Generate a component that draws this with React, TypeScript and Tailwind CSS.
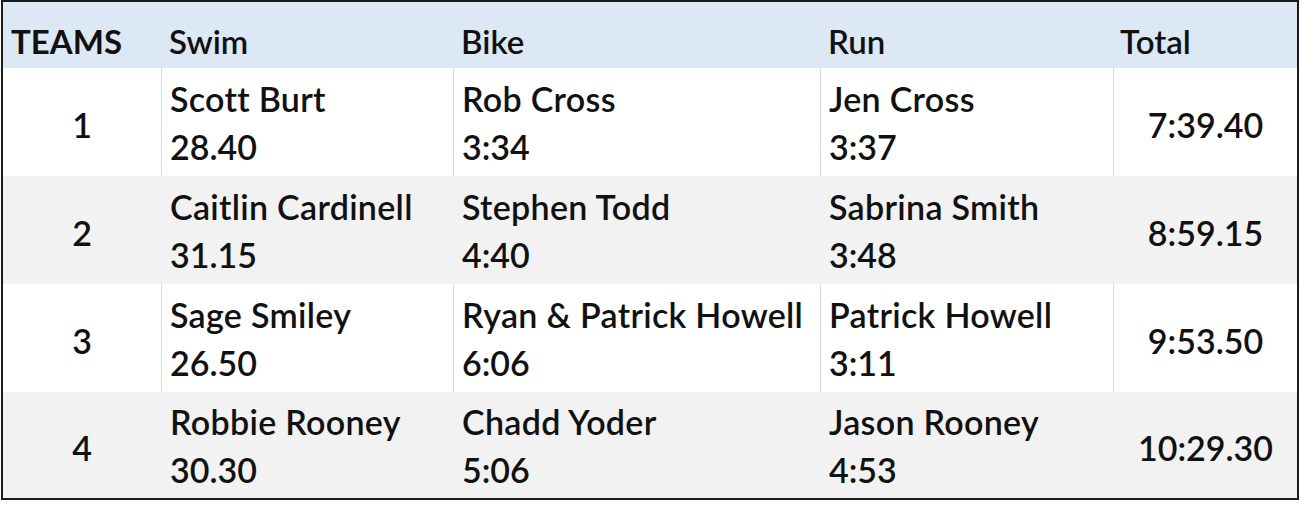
const rows = [
  { team: "1", swim: ["Scott Burt", "28.40"], bike: ["Rob Cross", "3:34"], run: ["Jen Cross", "3:37"], total: "7:39.40" },
  { team: "2", swim: ["Caitlin Cardinell", "31.15"], bike: ["Stephen Todd", "4:40"], run: ["Sabrina Smith", "3:48"], total: "8:59.15" },
  { team: "3", swim: ["Sage Smiley", "26.50"], bike: ["Ryan & Patrick Howell", "6:06"], run: ["Patrick Howell", "3:11"], total: "9:53.50" },
  { team: "4", swim: ["Robbie Rooney", "30.30"], bike: ["Chadd Yoder", "5:06"], run: ["Jason Rooney", "4:53"], total: "10:29.30" },
];

const cols = "grid grid-cols-[158px_292px_367px_293px_184px]";

function Leg({ lines, line }: { lines: string[]; line: string }) {
  return (
    <div className={`flex flex-col justify-center border-l ${line} pl-[8px] pt-[1px] leading-[48px]`}>
      <span className="whitespace-nowrap tracking-[0.3px]">{lines[0]}</span>
      <span>{lines[1]}</span>
    </div>
  );
}

export default function App() {
  return (
    <div className="bg-white w-[1300px] h-[505px] pl-px">
      <div
        className="w-[1298px] border-2 border-[#1c1c1c] text-[34px] font-semibold text-[#111]"
        style={{ fontFamily: "Lato, 'Noto Sans', sans-serif" }}
      >
        {/* header */}
        <div className={`${cols} h-[66px] items-center bg-[#dde8f5] pt-[13px] text-[33px]`}>
          <div className="pl-[8px] font-bold">TEAMS</div>
          <div className="pl-[8px]">Swim</div>
          <div className="pl-[8px]">Bike</div>
          <div className="pl-[8px]">Run</div>
          <div className="pl-[7px]">Total</div>
        </div>

        {rows.map((r, i) => {
          const odd = i % 2 === 1;
          const line = odd ? "border-[#f2f2f2]" : "border-[#dadada]";
          return (
            <div key={r.team} className={`${cols} ${i === 3 ? "h-[106px]" : "h-[108px]"} ${odd ? "bg-[#f2f2f2]" : "bg-white"}`}>
              <div className="flex items-center justify-center pt-[4px]">{r.team}</div>
              <Leg lines={r.swim} line={line} />
              <Leg lines={r.bike} line={line} />
              <Leg lines={r.run} line={line} />
              <div className={`flex items-center justify-center border-l ${line} pt-[4px]`}>{r.total}</div>
            </div>
          );
        })}
      </div>
    </div>
  );
}
